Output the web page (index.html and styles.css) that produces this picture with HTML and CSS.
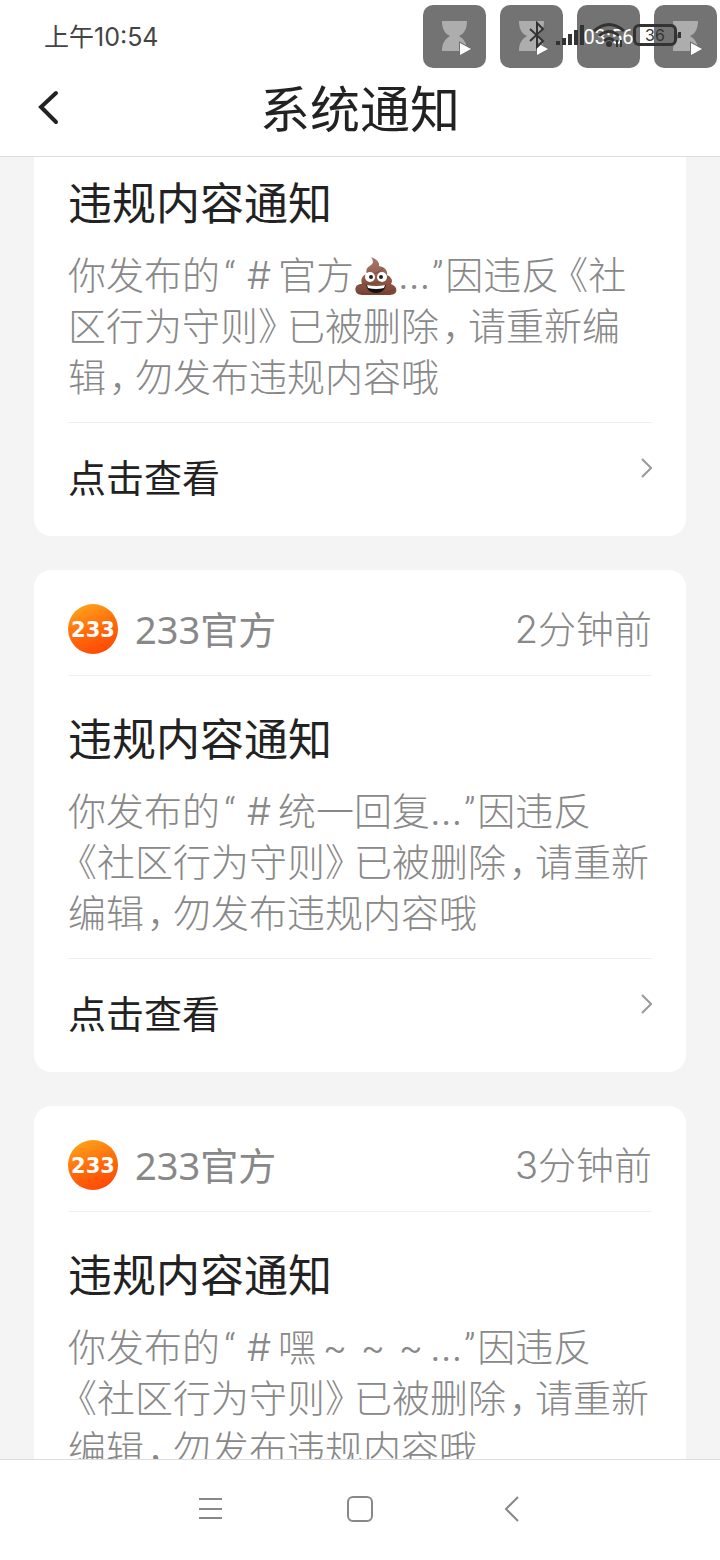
FILE: index.html
```html
<!DOCTYPE html>
<html lang="zh-CN">
<head>
<meta charset="utf-8">
<meta name="viewport" content="width=device-width, initial-scale=1">
<title>系统通知</title>
<link rel="stylesheet" href="styles.css">
</head>
<body>
<svg class="defs" aria-hidden="true">
  <defs>
    <linearGradient id="brand" x1="0.2" y1="0" x2="0.6" y2="1">
      <stop offset="0" stop-color="#ffa61a"/>
      <stop offset="0.5" stop-color="#ff6f0c"/>
      <stop offset="1" stop-color="#ff4a05"/>
    </linearGradient>
    <linearGradient id="poo" x1="0" y1="0" x2="0" y2="1">
      <stop offset="0" stop-color="#a9786a"/>
      <stop offset="1" stop-color="#7b4232"/>
    </linearGradient>
    <symbol id="hourglass" viewBox="0 0 63 63">
      <path d="M19 16H44C44 24 41 29 36 31C41 34 44 38 44 46H19C19 38 22 34 27 31C22 29 19 24 19 16Z" fill="#fff" fill-opacity="0.42"/>
      <path d="M37 38L48 44L37 50Z" fill="#fff" stroke="#707070" stroke-width="2" paint-order="stroke"/>
    </symbol>
    <symbol id="logo" viewBox="0 0 50 50">
      <circle cx="25" cy="25" r="25" fill="url(#brand)"/>
      <text class="logo-text" x="25" y="33" text-anchor="middle">233</text>
    </symbol>
    <symbol id="chevron" viewBox="0 0 12 30">
      <path d="M2 6L11 15L2 24" fill="none" stroke="#999" stroke-width="2"/>
    </symbol>
  </defs>
</svg>

<header class="top">
  <div class="status">
    <time class="clock">上午10:54</time>
    <div class="tiles">
      <span class="tile"><svg width="63" height="63"><use href="#hourglass"/></svg></span>
      <span class="tile"><svg width="63" height="63"><use href="#hourglass"/></svg></span>
      <span class="tile">03:56</span>
      <span class="tile"><svg width="63" height="63"><use href="#hourglass"/></svg></span>
    </div>
    <div class="signals">
      <svg width="20" height="30" viewBox="0 0 20 30" aria-label="蓝牙"><path d="M2 9L15 21L9 27V3L15 9L2 21" fill="none" stroke="#333" stroke-width="2"/></svg>
      <svg width="30" height="30" viewBox="0 0 30 30" aria-label="信号"><path d="M3 25V21M9 25V18M15 25V14M21 25V10M27 25V5" fill="none" stroke="#333" stroke-width="4"/></svg>
      <svg width="34" height="30" viewBox="0 0 34 30" aria-label="无线网络"><path d="M2 11Q17 -2 32 11M7 16Q17 7 27 16M12 21Q17 16 22 21" fill="none" stroke="#333" stroke-width="3"/><circle cx="17" cy="24" r="3" fill="#333"/><path d="M25 20V27M29 20V27" stroke="#333" stroke-width="2"/></svg>
      <span class="battery">36</span>
    </div>
  </div>
  <div class="bar">
    <button class="back" type="button" aria-label="返回"><svg width="24" height="36" viewBox="0 0 24 36"><path d="M20 4L5 18L20 33" fill="none" stroke="#222" stroke-width="4" stroke-linecap="round"/></svg></button>
    <h1 class="heading">系统通知</h1>
  </div>
</header>

<main class="feed">
  <article class="card card-continued">
    <div class="content">
      <h2 class="title">违规内容通知</h2>
      <p class="message">你发布的<span class="quote">“</span><span class="cell">#</span>官方<svg class="emoji" role="img" aria-label="便便" width="42" height="39" viewBox="0 0 42 39"><path d="M16 0C21 2 25 5 24 9C30 10 33 14 32 18C37 20 38 24 36 27C41 29 42 32 41 35C39 39 33 38 21 38C9 38 3 39 1 35C-1 30 2 27 7 27C5 22 8 18 12 17C10 12 13 10 16 8C19 6 18 3 16 0Z" fill="url(#poo)"/><path d="M12 18C19 18 26 14 28 11M7 27C16 27 31 26 34 19M4 36C16 37 33 37 39 32" fill="none" stroke="#6b3526" stroke-opacity="0.5"/><circle cx="15" cy="20" r="5" fill="#fff"/><circle cx="27" cy="20" r="5" fill="#fff"/><circle cx="16" cy="20" r="2" fill="#222"/><circle cx="26" cy="20" r="2" fill="#222"/><path d="M11 28Q21 30 31 28Q29 36 21 36Q13 36 11 28Z" fill="#111"/><path d="M12 28Q21 30 30 28L29 31Q21 33 13 31Z" fill="#fff"/></svg>...<span class="quote quote-end">”</span>因违反<span class="open">《</span>社区行为守则<span class="close">》</span>已被删除<span class="comma">，</span>请重新编辑<span class="comma">，</span>勿发布违规内容哦</p>
    </div>
    <a class="more" href="#"><span>点击查看</span><svg width="12" height="30"><use href="#chevron"/></svg></a>
  </article>

  <article class="card">
    <div class="source">
      <svg class="avatar" width="50" height="50"><use href="#logo"/></svg>
      <span class="name">233官方</span>
      <time class="ago">2分钟前</time>
    </div>
    <div class="content">
      <h2 class="title">违规内容通知</h2>
      <p class="message">你发布的<span class="quote">“</span><span class="cell">#</span>统一回复...<span class="quote quote-end">”</span>因违反<span class="open">《</span>社区行为守则<span class="close">》</span>已被删除<span class="comma">，</span>请重新编辑<span class="comma">，</span>勿发布违规内容哦</p>
    </div>
    <a class="more" href="#"><span>点击查看</span><svg width="12" height="30"><use href="#chevron"/></svg></a>
  </article>

  <article class="card">
    <div class="source">
      <svg class="avatar" width="50" height="50"><use href="#logo"/></svg>
      <span class="name">233官方</span>
      <time class="ago">3分钟前</time>
    </div>
    <div class="content">
      <h2 class="title">违规内容通知</h2>
      <p class="message">你发布的<span class="quote">“</span><span class="cell">#</span>嘿<span class="cell">~</span><span class="cell">~</span><span class="cell">~</span>...<span class="quote quote-end">”</span>因违反<span class="open">《</span>社区行为守则<span class="close">》</span>已被删除<span class="comma">，</span>请重新编辑<span class="comma">，</span>勿发布违规内容哦</p>
    </div>
    <a class="more" href="#"><span>点击查看</span><svg width="12" height="30"><use href="#chevron"/></svg></a>
  </article>
</main>

<nav class="system-nav">
  <button type="button" aria-label="最近任务"><svg width="30" height="30" viewBox="0 0 30 30"><path d="M5 5H28M5 15H28M5 24H28" fill="none" stroke="#888" stroke-width="2"/></svg></button>
  <button type="button" aria-label="主屏幕"><svg width="30" height="30" viewBox="0 0 30 30"><rect x="3" y="3" width="24" height="24" rx="5" fill="none" stroke="#888" stroke-width="2"/></svg></button>
  <button type="button" aria-label="返回"><svg width="30" height="30" viewBox="0 0 30 30"><path d="M22 3L10 15L22 27" fill="none" stroke="#888" stroke-width="2"/></svg></button>
</nav>
</body>
</html>
```
FILE: styles.css
```css
* {
  box-sizing: border-box;
  margin: 0;
  padding: 0;
}

body {
  display: flex;
  flex-direction: column;
  height: 100vh;
  overflow: hidden;
  background: #f4f4f4;
  color: #222;
  font-family: Inter, "Noto Sans CJK SC", sans-serif;
}

button {
  display: flex;
  border: 0;
  background: none;
}

.defs {
  position: absolute;
  width: 0;
  height: 0;
}

.logo-text {
  fill: #fff;
  font: bold 21px "DejaVu Sans", sans-serif;
}

.top {
  flex: none;
  background: #fff;
  border-bottom: 1px solid #ddd;
}

.status {
  position: relative;
  display: flex;
  align-items: center;
  justify-content: space-between;
  height: 72px;
  padding: 0 43px 2px 44px;
}

.clock {
  color: #444;
  font-size: 25px;
}

.signals {
  z-index: 1;
  display: flex;
  align-items: center;
  gap: 7px;
}

.battery {
  position: relative;
  width: 44px;
  height: 22px;
  border: 3px solid #333;
  border-radius: 6px;
  color: #333;
  font-size: 16px;
  line-height: 16px;
  text-align: center;
}

.battery::after {
  content: "";
  position: absolute;
  top: 5px;
  right: -7px;
  width: 3px;
  height: 6px;
  background: #333;
}

.tiles {
  position: absolute;
  top: 5px;
  right: 3px;
  display: flex;
  gap: 14px;
}

.tile {
  display: flex;
  align-items: center;
  justify-content: center;
  width: 63px;
  height: 63px;
  border-radius: 10px;
  background: rgba(0, 0, 0, 0.55);
  color: #fff;
  font-family: Roboto, sans-serif;
  font-size: 20px;
}

.bar {
  display: grid;
  grid-template-columns: 60px 1fr 60px;
  align-items: center;
  padding: 8px 0 16px;
}

.back {
  padding: 0 0 6px 36px;
}

.heading {
  font-size: 50px;
  font-weight: 400;
  line-height: 60px;
  text-align: center;
}

.feed {
  flex: 1;
  min-height: 0;
  overflow: hidden;
  padding: 0 34px;
}

.card {
  margin-bottom: 34px;
  padding: 0 34px;
  border-radius: 17px;
  background: #fff;
}

.card-continued {
  padding-top: 21px;
  border-radius: 0 0 17px 17px;
}

.source {
  display: flex;
  align-items: center;
  gap: 17px;
  margin-bottom: 38px;
  padding: 34px 0 21px;
  border-bottom: 1px solid #eee;
  color: #888;
  font-size: 38px;
  line-height: 50px;
}

.name {
  font-family: "Noto Sans", "Noto Sans CJK SC", sans-serif;
}

.ago {
  margin-left: auto;
  font-weight: 300;
}

.content {
  padding-bottom: 19px;
  border-bottom: 1px solid #eee;
}

.title {
  margin-bottom: 20px;
  font-size: 44px;
  font-weight: 400;
  line-height: 52px;
}

.message {
  color: #888;
  font-size: 38px;
  font-weight: 300;
  line-height: 51px;
}

.cell {
  display: inline-block;
  width: 1em;
  text-align: center;
}

.quote {
  display: inline-block;
  width: 20px;
  font-family: Roboto, sans-serif;
  line-height: 40px;
  text-align: center;
}

.quote-end {
  width: 15px;
}

.open,
.close,
.comma {
  font-feature-settings: "halt";
}

.open {
  padding-left: 10px;
}

.close {
  padding-right: 10px;
}

.comma {
  padding: 0 7px 0 3px;
}

.emoji {
  margin: 0 1px;
  vertical-align: -7px;
}

.more {
  display: flex;
  align-items: flex-start;
  justify-content: space-between;
  padding: 30px 0 33px;
  color: #222;
  font-size: 38px;
  line-height: 50px;
  text-decoration: none;
}

.system-nav {
  flex: none;
  display: flex;
  justify-content: center;
  gap: 121px;
  padding: 34px 0 36px;
  border-top: 1px solid #ddd;
  background: #fff;
}
```
